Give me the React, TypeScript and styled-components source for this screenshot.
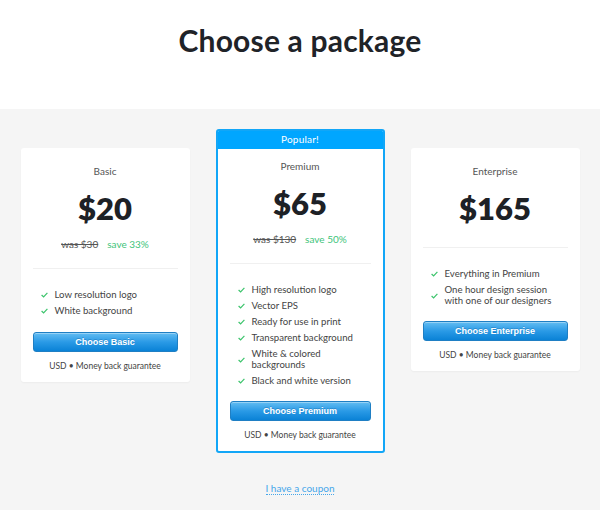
import React from 'react'
import styled, { createGlobalStyle } from 'styled-components';

const GlobalStyle = createGlobalStyle`
    html, body {
        margin: 0;
        padding: 0;
        background: #f5f5f5;
    }
    body {
        font-family: Lato, "Open Sans", sans-serif;
        color: #222;
    }
`;

const Page = styled.div`
    width: 600px;
    min-height: 510px;
    background: #f5f5f5;
`;

const Header = styled.header`
    height: 109px;
    background: white;
    box-sizing: border-box;
    padding-top: 21px;
    text-align: center;
`;

const Title = styled.h1`
    margin: 0;
    font-size: 30px;
    line-height: 38px;
    font-weight: 700;
    color: #1f2328;
    letter-spacing: 0.2px;
`;

const Plans = styled.section`
    display: flex;
    justify-content: center;
    align-items: flex-start;
    gap: 26px;
    padding-top: 20px;
`;

const Card = styled.div<{ $popular?: boolean }>`
    width: 169px;
    box-sizing: border-box;
    background: white;
    border-radius: 3px;
    margin-top: ${p => p.$popular ? '0' : '19px'};
    border: ${p => p.$popular ? '2px solid #12a6f7' : 'none'};
    box-shadow: ${p => p.$popular ? 'none' : '0 1px 2px rgba(0, 0, 0, 0.04)'};
    overflow: hidden;
`;

const Ribbon = styled.div`
    height: 18px;
    background: #00a6ff;
    color: white;
    font-size: 10px;
    line-height: 17px;
    text-align: center;
    letter-spacing: 0.2px;
`;

const Body = styled.div<{ $popular?: boolean }>`
    padding: ${p => p.$popular ? '11px 0 11px' : '17px 0 11px'};
    display: flex;
    flex-direction: column;
`;

const Name = styled.div`
    font-size: 10px;
    line-height: 12px;
    color: #555;
    text-align: center;
`;

const Price = styled.div`
    margin-top: 13px;
    font-size: 31px;
    line-height: 36px;
    font-weight: 800;
    color: #1d2126;
    text-align: center;
`;

const Deal = styled.div`
    margin-top: 12px;
    display: flex;
    justify-content: center;
    gap: 9px;
    font-size: 10px;
    line-height: 12px;
`;

const Was = styled.span`
    color: #555;
    text-decoration: line-through;
`;

const Save = styled.span`
    color: #3ec47a;
`;

const Divider = styled.hr<{ $space: number }>`
    margin: ${p => p.$space}px 12px 0;
    border: none;
    border-top: 1px solid #f0f0f0;
    height: 0;
`;

const Features = styled.ul`
    list-style: none;
    margin: 21px 0 0;
    padding: 0 10px 0 20px;
    display: flex;
    flex-direction: column;
    gap: 5.5px;
`;

const Feature = styled.li`
    display: flex;
    align-items: center;
    gap: 7px;
    font-size: 9.6px;
    line-height: 10.5px;
    color: #444;
`;

const Check = styled.svg`
    width: 7px;
    height: 6px;
    flex: none;
`;

const Button = styled.button`
    margin: 15px 12px 0;
    height: 20px;
    border: 1px solid #1f7fc4;
    border-radius: 3px;
    background: linear-gradient(#63bdf2, #2a9ae6 50%, #0a82d6);
    box-shadow: inset 0 1px 0 rgba(255, 255, 255, 0.35);
    color: white;
    font-family: "Liberation Sans", Arial, sans-serif;
    font-size: 9px;
    font-weight: 700;
    text-shadow: 0 -1px 0 rgba(0, 60, 120, 0.25);
    cursor: pointer;
`;

const Guarantee = styled.div`
    margin-top: 9px;
    font-size: 8.5px;
    line-height: 10px;
    color: #444;
    text-align: center;
`;

const CouponRow = styled.div`
    text-align: center;
    padding-top: 23px;
`;

const Coupon = styled.a`
    font-size: 10px;
    line-height: 12px;
    color: #45a6ea;
    text-decoration: none;
    border-bottom: 1px dotted #45a6ea;
    cursor: pointer;
`;

interface Plan {
    name: string,
    price: string,
    was?: string,
    save?: string,
    features: React.ReactNode[],
    popular?: boolean,
}

const plans: Plan[] = [
    {
        name: 'Basic', price: '$20', was: 'was $30', save: 'save 33%',
        features: ['Low resolution logo', 'White background'],
    },
    {
        name: 'Premium', price: '$65', was: 'was $130', save: 'save 50%', popular: true,
        features: ['High resolution logo', 'Vector EPS', 'Ready for use in print', 'Transparent background',
            <>White &amp; colored<br />backgrounds</>, 'Black and white version'],
    },
    {
        name: 'Enterprise', price: '$165',
        features: ['Everything in Premium', <>One hour design session<br />with one of our designers</>],
    },
];

const Tick = () => (
    <Check viewBox="0 0 7 6">
        <polyline points="0.6,3 2.6,5 6.4,0.8" fill="none" stroke="#3cc46c" strokeWidth="1.2" />
    </Check>
);

const PlanCard = ({ plan }: { plan: Plan }) => (
    <Card $popular={plan.popular}>
        {plan.popular ? <Ribbon>Popular!</Ribbon> : null}
        <Body $popular={plan.popular}>
            <Name>{plan.name}</Name>
            <Price>{plan.price}</Price>
            {plan.was ? (
                <Deal>
                    <Was>{plan.was}</Was>
                    <Save>{plan.save}</Save>
                </Deal>
            ) : null}
            <Divider $space={plan.was ? 18 : 21} />
            <Features>
                {plan.features.map((f, i) => (
                    <Feature key={i}><Tick /><span>{f}</span></Feature>
                ))}
            </Features>
            <Button type="button">Choose {plan.name}</Button>
            <Guarantee>USD &bull; Money back guarantee</Guarantee>
        </Body>
    </Card>
);

const App = (): JSX.Element => (
    <Page>
        <GlobalStyle />
        <Header>
            <Title>Choose a package</Title>
        </Header>
        <Plans>
            {plans.map(p => <PlanCard key={p.name} plan={p} />)}
        </Plans>
        <CouponRow>
            <Coupon>I have a coupon</Coupon>
        </CouponRow>
    </Page>
);

export default App;
